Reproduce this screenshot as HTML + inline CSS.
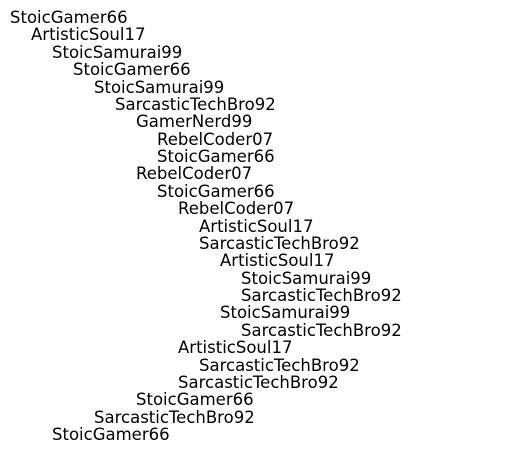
<!DOCTYPE html>
<html><head><meta charset="utf-8"><style>
html,body{margin:0;padding:0;background:#fff;width:515px;height:469px;overflow:hidden}
.c{position:absolute;top:9px;left:10px;font-family:"DejaVu Sans",sans-serif;font-size:16.5px;line-height:17.375px;color:#000}
.c div{height:17.375px;white-space:nowrap}
</style></head><body><div class="c"><div style="margin-left:0">StoicGamer66</div><div style="margin-left:21px">ArtisticSoul17</div><div style="margin-left:42px">StoicSamurai99</div><div style="margin-left:63px">StoicGamer66</div><div style="margin-left:84px">StoicSamurai99</div><div style="margin-left:105px">SarcasticTechBro92</div><div style="margin-left:126px">GamerNerd99</div><div style="margin-left:147px">RebelCoder07</div><div style="margin-left:147px">StoicGamer66</div><div style="margin-left:126px">RebelCoder07</div><div style="margin-left:147px">StoicGamer66</div><div style="margin-left:168px">RebelCoder07</div><div style="margin-left:189px">ArtisticSoul17</div><div style="margin-left:189px">SarcasticTechBro92</div><div style="margin-left:210px">ArtisticSoul17</div><div style="margin-left:231px">StoicSamurai99</div><div style="margin-left:231px">SarcasticTechBro92</div><div style="margin-left:210px">StoicSamurai99</div><div style="margin-left:231px">SarcasticTechBro92</div><div style="margin-left:168px">ArtisticSoul17</div><div style="margin-left:189px">SarcasticTechBro92</div><div style="margin-left:168px">SarcasticTechBro92</div><div style="margin-left:126px">StoicGamer66</div><div style="margin-left:84px">SarcasticTechBro92</div><div style="margin-left:42px">StoicGamer66</div></div></body></html>
